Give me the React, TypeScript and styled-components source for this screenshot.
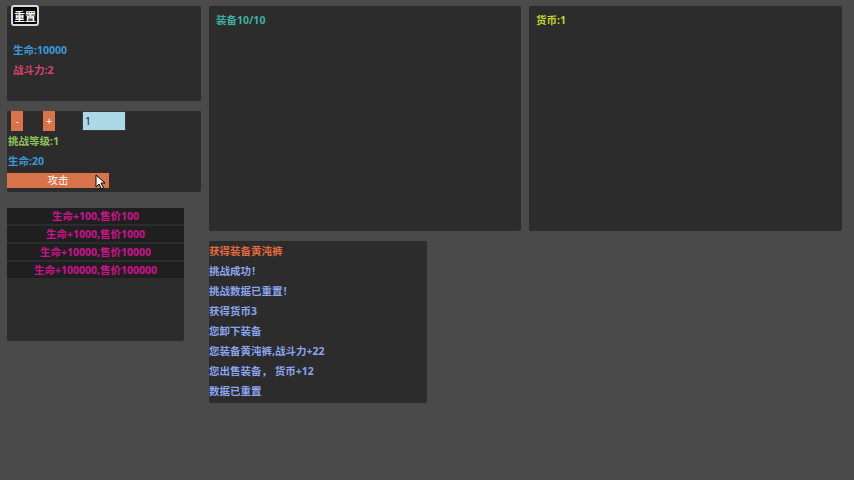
import styled, { createGlobalStyle } from 'styled-components';

const palette = {
  page: '#4a4a4a',
  panel: '#2c2c2c',
  row: '#1f1f1f',
  blue: '#3a9ad9',
  pink: '#d8426f',
  green: '#8fc25a',
  orange: '#d9734a',
  teal: '#3db2a0',
  lime: '#c2d22c',
  magenta: '#cf1190',
  logRed: '#e56a3c',
  logBlue: '#8aa4ee',
};

const GlobalStyle = createGlobalStyle`
  body {
    margin: 0;
    background: ${palette.page};
    font-family: "Noto Sans", "Noto Sans CJK SC", sans-serif;
    font-size: 10.5px;
    font-weight: bold;
  }
`;

const Page = styled.div`
  display: flex;
  align-items: flex-start;
  gap: 8px;
  padding: 6px 7px;
  height: 480px;
  box-sizing: border-box;
`;

const Column = styled.div<{ $width: number }>`
  display: flex;
  flex-direction: column;
  align-items: flex-start;
  width: ${p => p.$width}px;
`;

const Panel = styled.div<{ $w: number; $h: number; $mt?: number }>`
  position: relative;
  width: ${p => p.$w}px;
  height: ${p => p.$h}px;
  margin-top: ${p => p.$mt ?? 0}px;
  background: ${palette.panel};
  border-radius: 2px;
  box-sizing: border-box;
`;

const ResetButton = styled.button`
  display: block;
  margin: -1px 0 0 4px;
  width: 28px;
  height: 21px;
  padding: 0;
  background: #000;
  color: #fff;
  border: 2px solid #d8d8d8;
  border-radius: 3px;
  font: inherit;
  font-size: 11px;
`;

const Line = styled.div<{ $color: string; $pl?: number }>`
  color: ${p => p.$color};
  line-height: 20px;
  padding-left: ${p => p.$pl ?? 0}px;
  white-space: nowrap;
`;

const Stats = styled.div`
  margin-top: 14px;
`;

const Controls = styled.div`
  display: flex;
  align-items: flex-start;
  height: 20px;
  padding-left: 4px;
`;

const StepButton = styled.button<{ $mr: number }>`
  width: 12px;
  height: 20px;
  padding: 0;
  margin-right: ${p => p.$mr}px;
  border: none;
  background: ${palette.orange};
  color: #fff;
  font: inherit;
  font-weight: normal;
  font-size: 10px;
`;

const LevelInput = styled.input`
  width: 44px;
  height: 20px;
  box-sizing: border-box;
  padding: 0 2px;
  border: 1px solid #3a3a3a;
  background: #add8e6;
  color: #222;
  font: inherit;
  font-weight: normal;
`;

const AttackButton = styled.button`
  display: block;
  width: 102px;
  height: 15px;
  margin-top: 2px;
  padding: 0;
  border: none;
  background: ${palette.orange};
  color: #fff;
  font: inherit;
  font-weight: normal;
  line-height: 15px;
`;

const Shop = styled.div`
  display: flex;
  flex-direction: column;
  gap: 2px;
`;

const ShopRow = styled.div`
  height: 16px;
  line-height: 16px;
  background: ${palette.row};
  color: ${palette.magenta};
  text-align: center;
`;

const Title = styled.div<{ $color: string }>`
  color: ${p => p.$color};
  padding: 7px 0 0 7px;
  line-height: 14px;
`;

const Cursor = styled.svg`
  position: absolute;
  left: 88px;
  top: 63px;
`;

const shopItems = [
  '生命+100,售价100',
  '生命+1000,售价1000',
  '生命+10000,售价10000',
  '生命+100000,售价100000',
];

const logs = [
  { text: '获得装备黄沌裤', color: palette.logRed },
  { text: '挑战成功！', color: palette.logBlue },
  { text: '挑战数据已重置！', color: palette.logBlue },
  { text: '获得货币3', color: palette.logBlue },
  { text: '您卸下装备', color: palette.logBlue },
  { text: '您装备黄沌裤,战斗力+22', color: palette.logBlue },
  { text: '您出售装备， 货币+12', color: palette.logBlue },
  { text: '数据已重置', color: palette.logBlue },
];

export default function App() {
  return (
    <>
      <GlobalStyle />
      <Page>
        <Column $width={194}>
          <Panel $w={194} $h={95}>
            <ResetButton>重置</ResetButton>
            <Stats>
              <Line $color={palette.blue} $pl={6}>生命:10000</Line>
              <Line $color={palette.pink} $pl={6}>战斗力:2</Line>
            </Stats>
          </Panel>
          <Panel $w={194} $h={81} $mt={10}>
            <Controls>
              <StepButton $mr={20}>-</StepButton>
              <StepButton $mr={27}>+</StepButton>
              <LevelInput defaultValue="1" />
            </Controls>
            <Line $color={palette.green} $pl={1}>挑战等级:1</Line>
            <Line $color={palette.blue} $pl={1}>生命:20</Line>
            <AttackButton>攻击</AttackButton>
            <Cursor width="12" height="16" viewBox="0 0 12 16">
              <path d="M1 1 L1 13 L4 10 L6.5 15 L8.5 14 L6 9 L10 9 Z" fill="#fff" stroke="#000" strokeWidth="1" />
            </Cursor>
          </Panel>
          <Panel $w={177} $h={133} $mt={16}>
            <Shop>
              {shopItems.map(item => (
                <ShopRow key={item}>{item}</ShopRow>
              ))}
            </Shop>
          </Panel>
        </Column>
        <Column $width={312}>
          <Panel $w={312} $h={225}>
            <Title $color={palette.teal}>装备10/10</Title>
          </Panel>
          <Panel $w={218} $h={162} $mt={10}>
            {logs.map(log => (
              <Line key={log.text} $color={log.color}>{log.text}</Line>
            ))}
          </Panel>
        </Column>
        <Panel $w={313} $h={225}>
          <Title $color={palette.lime}>货币:1</Title>
        </Panel>
      </Page>
    </>
  );
}
